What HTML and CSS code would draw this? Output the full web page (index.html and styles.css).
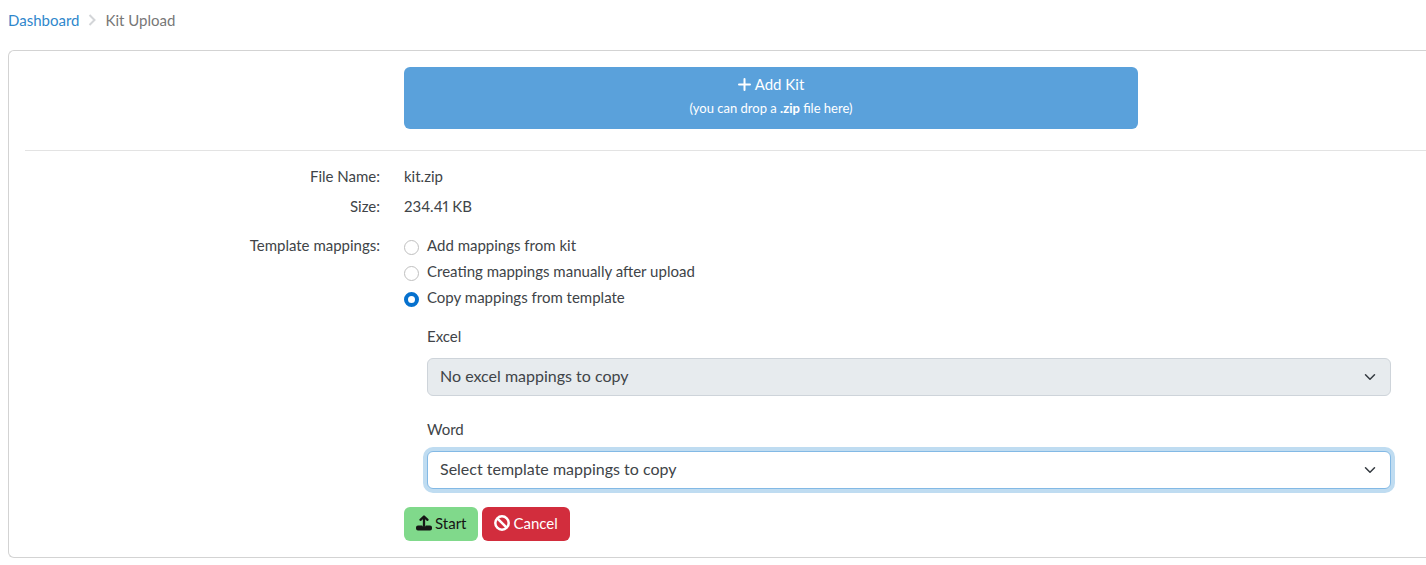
FILE: index.html
```html
<!DOCTYPE html>
<html lang="en">
<head>
<meta charset="utf-8">
<title>Kit Upload</title>
<link rel="stylesheet" href="styles.css">
</head>
<body>
<nav class="breadcrumb" aria-label="Breadcrumb">
  <a class="breadcrumb-link" href="#">Dashboard</a>
  <svg class="breadcrumb-icon" viewBox="0 0 8 12" aria-hidden="true"><path d="M1.500 1l5 5-5 5" fill="none" stroke="currentColor" stroke-width="2"/></svg>
  <span>Kit Upload</span>
</nav>
<main class="card">
  <div class="row">
    <button class="add-kit" type="button">
      <span class="add-title"><svg class="plus" viewBox="0 0 13 13" aria-hidden="true"><path d="M6.500 1v11M1 6.500h11" stroke="currentColor" stroke-width="2" stroke-linecap="round"/></svg>Add Kit</span>
      <span class="add-hint">(you can drop a <strong>.zip</strong> file here)</span>
    </button>
  </div>
  <hr class="divider">
  <div class="row row-file">
    <div class="row-label">File Name:</div>
    <div class="row-value">kit.zip</div>
  </div>
  <div class="row row-size">
    <div class="row-label">Size:</div>
    <div class="row-value">234.41 KB</div>
  </div>
  <form class="row">
    <div class="row-label" id="mappings-label">Template mappings:</div>
    <div class="row-value">
      <div class="options" role="radiogroup" aria-labelledby="mappings-label">
        <label class="option"><input class="radio" type="radio" name="mappings"><span>Add mappings from kit</span></label>
        <label class="option"><input class="radio" type="radio" name="mappings"><span>Creating mappings manually after upload</span></label>
        <label class="option"><input class="radio" type="radio" name="mappings" checked><span>Copy mappings from template</span></label>
      </div>
      <div class="fields">
        <div class="field">
          <label class="field-label" for="excel">Excel</label>
          <div class="select-wrap">
            <select class="select" id="excel" disabled><option>No excel mappings to copy</option></select>
            <svg class="chevron" viewBox="0 0 16 16" aria-hidden="true"><path d="M2 5l6 6 6-6" fill="none" stroke="currentColor" stroke-width="2" stroke-linecap="round" stroke-linejoin="round"/></svg>
          </div>
        </div>
        <div class="field">
          <label class="field-label" for="word">Word</label>
          <div class="select-wrap">
            <select class="select select-active" id="word"><option>Select template mappings to copy</option></select>
            <svg class="chevron" viewBox="0 0 16 16" aria-hidden="true"><path d="M2 5l6 6 6-6" fill="none" stroke="currentColor" stroke-width="2" stroke-linecap="round" stroke-linejoin="round"/></svg>
          </div>
        </div>
      </div>
      <div class="actions">
        <button class="button button-start" type="button"><svg class="button-icon" viewBox="0 0 16 16" aria-hidden="true"><path d="M8 11V2M4.500 4.800L8 1.500l3.500 3.300" fill="none" stroke="currentColor" stroke-width="2.300" stroke-linecap="round" stroke-linejoin="round"/><path d="M2 10.500h4.200a1.900 1.900 0 0 0 3.600 0H14a2 2 0 0 1 2 2v1a2 2 0 0 1-2 2H2a2 2 0 0 1-2-2v-1a2 2 0 0 1 2-2z" fill="currentColor"/></svg>Start</button>
        <button class="button button-cancel" type="button"><svg class="button-icon" viewBox="0 0 16 16" aria-hidden="true"><circle cx="8" cy="8" r="6.700" fill="none" stroke="currentColor" stroke-width="2.500"/><path d="M3.300 3.300l9.400 9.400" stroke="currentColor" stroke-width="2.500"/></svg>Cancel</button>
      </div>
    </div>
  </form>
</main>
</body>
</html>
```
FILE: styles.css
```css
* {
  box-sizing: border-box;
}

body {
  margin: 0;
  padding: 10px 0 7px 8px;
  background: #fff;
  color: #404448;
  font-family: Lato, "Liberation Sans", sans-serif;
  font-size: 15px;
  font-variant-numeric: proportional-nums;
  line-height: 20px;
}

.breadcrumb {
  display: flex;
  align-items: center;
  gap: 9px;
  margin-bottom: 20px;
  color: #777;
}

.breadcrumb-link {
  color: #2f87cc;
  text-decoration: none;
}

.breadcrumb-icon {
  width: 8px;
  height: 12px;
  color: #d3d5d8;
}

.card {
  padding: 16px 0 16px 16px;
  border: 1px solid #d3d3d3;
  border-right: 0;
  border-radius: 6px 0 0 6px;
}

.row {
  display: grid;
  grid-template-columns: 355fr 734fr 264fr;
  column-gap: 24px;
}

.row-file {
  margin-bottom: 10px;
}

.row-size {
  margin-bottom: 19px;
}

.row-label {
  text-align: right;
}

.row-value {
  grid-column: 2 / 4;
}

.add-kit {
  grid-column: 2;
  display: flex;
  flex-direction: column;
  align-items: center;
  padding: 5px 12px 9px;
  border: 0;
  border-radius: 6px;
  background: #5aa1db;
  color: #fff;
  font: inherit;
  line-height: 24px;
}

.add-title {
  display: flex;
  align-items: center;
  gap: 4px;
}

.plus {
  width: 13px;
  height: 13px;
}

.add-hint {
  font-size: 13px;
}

.divider {
  height: 1px;
  margin: 21px 0 15px;
  border: 0;
  background: #e3e3e3;
}

.options {
  display: grid;
  gap: 6px;
  margin-bottom: 19px;
}

.option {
  display: flex;
  align-items: center;
  gap: 8px;
  justify-self: start;
}

.radio {
  appearance: none;
  width: 15px;
  height: 15px;
  margin: 4px 0 0;
  border: 1px solid #bfbfbf;
  border-radius: 50%;
  background: #fff;
}

.radio:checked {
  border: 4px solid #0671ce;
}

.fields {
  display: grid;
  gap: 23px;
  margin-bottom: 18px;
  padding: 0 35px 0 23px;
}

.field-label {
  display: block;
  margin-bottom: 12px;
}

.select-wrap {
  position: relative;
}

.select {
  display: block;
  appearance: none;
  width: 100%;
  height: 38px;
  padding: 0 36px 2px 12px;
  border: 1px solid #ced4da;
  border-radius: 6px;
  background: #fff;
  color: #404448;
  font: inherit;
  font-size: 16px;
  opacity: 1;
}

.select:disabled {
  background: #e7ebee;
}

.select-active {
  border-color: #83b9e5;
  outline: none;
  box-shadow: 0 0 0 4px #bfdcf1;
}

.chevron {
  position: absolute;
  top: 13px;
  right: 15px;
  width: 12px;
  height: 12px;
  color: #343a40;
  pointer-events: none;
}

.actions {
  display: flex;
  gap: 4px;
}

.button {
  display: flex;
  align-items: center;
  gap: 3px;
  height: 34px;
  padding: 0 12px 3px;
  border: 0;
  border-radius: 6px;
  font: inherit;
}

.button-icon {
  width: 16px;
  height: 16px;
}

.button-start {
  background: #80d98b;
  color: #151515;
}

.button-cancel {
  background: #d22d3d;
  color: #fff;
}
```
